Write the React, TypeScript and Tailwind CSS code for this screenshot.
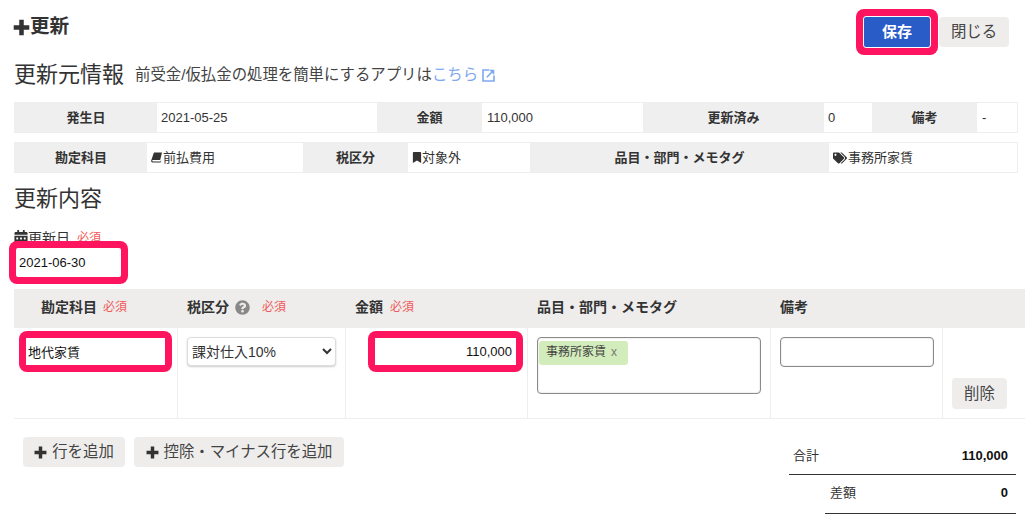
import { FaBookmark, FaCalendarAlt, FaQuestionCircle, FaTags } from 'react-icons/fa';

const FONT = "font-['Liberation_Sans','Noto_Sans_CJK_JP',sans-serif]";

const thCell = 'flex items-center justify-center bg-[#efefef] text-[13px] font-bold text-[#333]';
const tdCell = 'flex items-center bg-white text-[13px] text-[#333]';
const greyBtn = 'flex items-center justify-center rounded-[4px] bg-[#eeedec] text-[15.4px] text-[#444]';

function Required({ className = '' }: { className?: string }) {
  return <span className={`text-[12px] font-normal text-[#ef5a5a] ${className}`}>必須</span>;
}

// thick square-ended plus, the icon font one
function PlusIcon({ className = '' }: { className?: string }) {
  return (
    <svg viewBox="0 0 12 12" className={className} fill="currentColor">
      <path d="M4.4 0.5h3.2v3.9h3.9v3.2H7.6v3.9H4.4V7.6H0.5V4.4h3.9z" />
    </svg>
  );
}

function BookIcon({ className = '' }: { className?: string }) {
  return (
    <svg viewBox="0 0 12 12" className={className} fill="currentColor">
      <path d="M3.2 0.5H12L10 8.6H2.4C1.6 8.6 1.2 9.1 1.3 9.6 1.4 10.1 1.8 10.3 2.4 10.3H10.4L10.9 8.9 11.2 9.1 10.6 11.5H2C0.8 11.5 0 10.6 0.2 9.3Z" />
    </svg>
  );
}

function ExternalIcon({ className = '' }: { className?: string }) {
  return (
    <svg viewBox="0 0 13 13" className={className} fill="none" stroke="currentColor">
      <path d="M7 1H1v11h11V6.5" strokeWidth="1.6" />
      <path d="M4.8 8.2 11 2" strokeWidth="1.6" />
      <path d="M7.6 1H12v4.4z" fill="currentColor" strokeWidth="0.6" />
    </svg>
  );
}

export default function App() {
  return (
    <div className={`${FONT} h-[525px] w-[1035px] overflow-hidden bg-white text-[#333]`}>
      <div className="flex h-[62px] pl-[14px]">
        <h1 className="mt-[17px] flex h-[20px] items-center text-[19.6px] font-bold leading-none text-[#333]">
          <PlusIcon className="-ml-[1px] h-[17px] w-[17px]" />
          更新
        </h1>
        <div className="ml-auto mr-[26px] mt-[9px] flex h-[46px] items-start">
          <div className="rounded-[8px] bg-[#ff1460] p-[7px]">
            <button className="flex h-[32px] w-[68px] items-center justify-center rounded-[3px] border border-white bg-[#2a5cc8] text-[15px] font-bold text-white">
              保存
            </button>
          </div>
          <button className={`${greyBtn} ml-[1px] mt-[8px] h-[30px] w-[70px]`}>閉じる</button>
        </div>
      </div>

      <div className="flex h-[40px] items-start pl-[14px]">
        <h2 className="text-[22px] font-normal leading-[25px] text-[#333]">更新元情報</h2>
        <p className="ml-[11px] mt-[3px] flex items-center text-[15.4px] leading-[20px] text-[#444]">
          前受金/仮払金の処理を簡単にするアプリは
          <a className="text-[#7fa8ee]">こちら</a>
          <ExternalIcon className="ml-[4px] h-[13px] w-[13px] text-[#7fa8ee]" />
        </p>
      </div>

      <div className="ml-[14px] grid h-[31px] w-[1004px] grid-cols-[142px_220px_105px_161px_181px_48px_105px_40px] border border-[#eee]">
        <div className={thCell}>発生日</div>
        <div className={`${tdCell} pl-[4px]`}>2021-05-25</div>
        <div className={thCell}>金額</div>
        <div className={`${tdCell} pl-[5px]`}>110,000</div>
        <div className={thCell}>更新済み</div>
        <div className={`${tdCell} pl-[4px]`}>0</div>
        <div className={thCell}>備考</div>
        <div className={`${tdCell} pl-[5px]`}>-</div>
      </div>

      <div className="ml-[14px] mt-[9px] grid h-[31px] w-[1004px] grid-cols-[132px_156px_105px_122px_299px_188px] border border-[#eee]">
        <div className={thCell}>勘定科目</div>
        <div className={tdCell}>
          <BookIcon className="ml-[4px] mr-[1px] h-[11px] w-[11px] text-[#333]" />
          前払費用
        </div>
        <div className={thCell}>税区分</div>
        <div className={tdCell}>
          <FaBookmark className="ml-[4px] h-[11px] w-[10px] text-[#333]" />
          対象外
        </div>
        <div className={thCell}>品目・部門・メモタグ</div>
        <div className={tdCell}>
          <FaTags className="ml-[4px] mr-[1px] h-[14px] w-[14px] text-[#333]" />
          事務所家賃
        </div>
      </div>

      <h2 className="ml-[14px] mt-[13px] text-[22px] font-normal leading-[25px] text-[#333]">更新内容</h2>

      <div className="relative ml-[9px] mt-[19px] h-[59px]">
        <label className="ml-[5px] flex h-[15px] items-center text-[14px] leading-none text-[#333]">
          <FaCalendarAlt className="h-[15px] w-[14px] shrink-0" />
          更新日
          <Required className="ml-[7px]" />
        </label>
        <div className="absolute left-0 top-[11px] h-[43px] w-[119px] rounded-[8px] bg-[#ff1460] p-[7px]">
          <input
            readOnly
            value="2021-06-30"
            className="h-[29px] w-[105px] rounded-[2px] bg-white pl-[3px] text-[13px] text-[#111] outline-none"
          />
        </div>
      </div>

      <div className="ml-[14px] grid h-[39px] w-[1011px] grid-cols-[163px_168px_182px_243px_255px] items-center bg-[#eeedec] pb-[3px] text-[14px] font-bold text-[#333]">
        <div className="flex items-center pl-[27px]">
          勘定科目
          <Required className="ml-[6px]" />
        </div>
        <div className="flex items-center pl-[10px]">
          税区分
          <FaQuestionCircle className="ml-[6px] h-[15px] w-[15px] text-[#888]" />
          <Required className="ml-[12px]" />
        </div>
        <div className="flex items-center pl-[10px]">
          金額
          <Required className="ml-[7px]" />
        </div>
        <div className="pl-[10px]">品目・部門・メモタグ</div>
        <div className="pl-[10px]">備考</div>
      </div>

      <div className="ml-[14px] grid h-[91px] w-[1011px] grid-cols-[163px_168px_182px_243px_172px_83px] border-b border-[#eee]">
        <div className="pl-[5px] pt-[3px]">
          <div className="h-[41px] w-[153px] rounded-[8px] bg-[#ff1460] p-[7px]">
            <input
              readOnly
              value="地代家賃"
              className="h-[27px] w-[139px] bg-white pl-[2px] text-[13px] text-[#111] outline-none"
            />
          </div>
        </div>
        <div className="border-l border-[#eee] pl-[9px] pt-[9px]">
          <select className="h-[29px] w-[149px] rounded-[4px] border border-[#ddd] bg-white text-[14px] text-[#333] shadow-[0_1px_2px_rgba(0,0,0,0.2)]">
            <option>課対仕入10%</option>
          </select>
        </div>
        <div className="border-l border-[#eee] pl-[22px] pt-[3px]">
          <div className="h-[41px] w-[155px] rounded-[8px] bg-[#ff1460] p-[7px]">
            <input
              readOnly
              value="110,000"
              className="h-[27px] w-[141px] bg-white pr-[4px] text-right text-[13px] text-[#111] outline-none"
            />
          </div>
        </div>
        <div className="border-l border-[#eee] pl-[9px] pt-[9px]">
          <div className="h-[57px] w-[224px] rounded-[4px] border border-[#8a8a8a] bg-white p-[1px] shadow-[inset_0_0_2px_rgba(0,0,0,0.2)]">
            <span className="inline-flex h-[24px] items-center rounded-[3px] bg-[#d3ecbb] pb-[2px] pl-[7px] pr-[11px] text-[12px] text-[#444]">
              事務所家賃
              <span className="ml-[5px] text-[12px] text-[#777]">x</span>
            </span>
          </div>
        </div>
        <div className="border-l border-[#eee] pl-[9px] pt-[9px]">
          <input
            readOnly
            className="h-[30px] w-[154px] rounded-[4px] border border-[#8a8a8a] bg-white shadow-[inset_0_0_2px_rgba(0,0,0,0.2)] outline-none"
          />
        </div>
        <div className="flex flex-col justify-end border-l border-[#eee] pb-[9px] pl-[9px]">
          <button className={`${greyBtn} h-[31px] w-[55px]`}>削除</button>
        </div>
      </div>

      <div className="flex pl-[23px] pt-[18px]">
        <button className={`${greyBtn} h-[30px] w-[102px]`}>
          <PlusIcon className="mr-[5px] h-[13px] w-[13px] text-[#333]" />
          行を追加
        </button>
        <button className={`${greyBtn} ml-[9px] h-[30px] w-[210px]`}>
          <PlusIcon className="mr-[5px] h-[13px] w-[13px] text-[#333]" />
          控除・マイナス行を追加
        </button>
        <div className="ml-[445px] w-[227px] text-[13px]">
          <div className="flex h-[38px] items-center justify-between border-b border-[#333] pl-[4px] pr-[8px]">
            <span>合計</span>
            <span className="text-[13px] font-bold text-[#111]">110,000</span>
          </div>
          <div className="ml-[36px] flex h-[39px] items-center justify-between border-b border-[#333] pb-[2px] pl-[5px] pr-[8px]">
            <span>差額</span>
            <span className="text-[13px] font-bold text-[#111]">0</span>
          </div>
        </div>
      </div>
    </div>
  );
}
